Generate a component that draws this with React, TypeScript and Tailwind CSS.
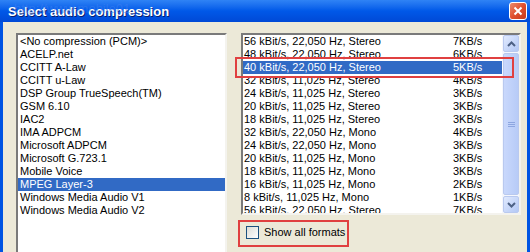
import React from 'react'

const codecs = [
  '<No compression (PCM)>',
  'ACELP.net',
  'CCITT A-Law',
  'CCITT u-Law',
  'DSP Group TrueSpeech(TM)',
  'GSM 6.10',
  'IAC2',
  'IMA ADPCM',
  'Microsoft ADPCM',
  'Microsoft G.723.1',
  'Mobile Voice',
  'MPEG Layer-3',
  'Windows Media Audio V1',
  'Windows Media Audio V2',
]

const formats: [string, string][] = [
  ['56 kBit/s, 22,050 Hz, Stereo', '7KB/s'],
  ['48 kBit/s, 22,050 Hz, Stereo', '6KB/s'],
  ['40 kBit/s, 22,050 Hz, Stereo', '5KB/s'],
  ['32 kBit/s, 11,025 Hz, Stereo', '4KB/s'],
  ['24 kBit/s, 11,025 Hz, Stereo', '3KB/s'],
  ['20 kBit/s, 11,025 Hz, Stereo', '3KB/s'],
  ['18 kBit/s, 11,025 Hz, Stereo', '3KB/s'],
  ['32 kBit/s, 22,050 Hz, Mono', '4KB/s'],
  ['24 kBit/s, 22,050 Hz, Mono', '3KB/s'],
  ['20 kBit/s, 11,025 Hz, Mono', '3KB/s'],
  ['18 kBit/s, 11,025 Hz, Mono', '3KB/s'],
  ['16 kBit/s, 11,025 Hz, Mono', '2KB/s'],
  ['8 kBit/s, 11,025 Hz, Mono', '1KB/s'],
  ['56 kBit/s, 22,050 Hz, Stereo', '7KB/s'],
]

const font = { fontFamily: '"Liberation Sans", Arial, sans-serif' }

function ScrollButton({ down }: { down?: boolean }) {
  return (
    <div className="h-[17px] w-[16px] rounded-[2px] border border-[#b9c9ef] bg-gradient-to-br from-[#e1eafe] to-[#b3c8f5] flex items-center justify-center">
      <svg width="9" height="6" viewBox="0 0 9 6">
        <path
          d={down ? 'M1 1 L4.5 4.5 L8 1' : 'M1 5 L4.5 1.5 L8 5'}
          fill="none"
          stroke="#4d6185"
          strokeWidth="2"
        />
      </svg>
    </div>
  )
}

export default function App() {
  return (
    <div className="relative w-[530px] h-[252px] overflow-hidden bg-[#0054e3] text-[11px] leading-[13px] text-black" style={font}>
      {/* Title bar */}
      <div className="relative h-[22px] flex items-center justify-between pl-[8px] pr-[3px] bg-gradient-to-b from-[#2f83f5] via-[#0058e8] to-[#0049d6]">
        <span className="text-white font-bold text-[13px] [text-shadow:1px_1px_0_#0a1e6e]">
          Select audio compression
        </span>
        <span className="absolute left-[14px] top-[2px] text-[13px] text-[#3e7ff0] opacity-50 pointer-events-none">
          http://www.mobile01
        </span>
        <div className="h-[18px] w-[18px] rounded-[3px] border border-white bg-gradient-to-br from-[#e98a6c] via-[#e0502f] to-[#c53a1c] flex items-center justify-center">
          <svg width="10" height="10" viewBox="0 0 10 10">
            <path d="M1.5 1.5 L8.5 8.5 M8.5 1.5 L1.5 8.5" stroke="white" strokeWidth="2" />
          </svg>
        </div>
      </div>

      {/* Body */}
      <div className="flex h-[230px] mx-[3px] bg-[#ece9d8] pt-[11px] pl-[13px] pr-[6px] gap-[14px]">
        {/* Codec list */}
        <div className="w-[211px] h-[240px] shrink-0 bg-white border-2 border-t-[#7a7a7a] border-l-[#7a7a7a] border-r-[#f4f3ee] border-b-[#f4f3ee]">
          {codecs.map((c, i) => (
            <div
              key={i}
              className={'h-[13px] pl-[2px] whitespace-nowrap ' + (i === 11 ? 'bg-[#316ac5] text-white' : '')}
            >
              {c}
            </div>
          ))}
        </div>

        {/* Format list + checkbox */}
        <div className="flex flex-col w-[280px]">
          <div className="flex h-[182px] bg-white border-2 border-t-[#7a7a7a] border-l-[#7a7a7a] border-r-[#f4f3ee] border-b-[#f4f3ee] overflow-hidden">
            <div className="flex-1 overflow-hidden">
              {formats.map(([a, b], i) => (
                <div
                  key={i}
                  className={'flex h-[13px] pl-[1px] whitespace-nowrap ' + (i === 2 ? 'bg-[#316ac5] text-white' : '')}
                >
                  <span className="w-[209px]">{a}</span>
                  <span>{b}</span>
                </div>
              ))}
            </div>
            <div className="w-[17px] flex flex-col items-end bg-[#f5f7fd]">
              <ScrollButton />
              <div className="flex-1 w-[16px] my-[1px] rounded-[2px] border border-[#b9c9ef] bg-gradient-to-r from-[#c9d8fc] to-[#b7cbf7] flex items-center justify-center">
                <svg width="7" height="7" viewBox="0 0 7 7">
                  <path d="M0 1.5 H7 M0 3.5 H7 M0 5.5 H7" stroke="#8da6e0" strokeWidth="1" />
                </svg>
              </div>
              <ScrollButton down />
            </div>
          </div>
          <div className="flex items-center gap-[5px] mt-[11px] pl-[5px]">
            <div className="h-[13px] w-[13px] border border-[#1c5180] bg-gradient-to-br from-[#dcdcd7] to-white" />
            <span>Show all formats</span>
          </div>
        </div>
      </div>

      {/* Annotation boxes */}
      <div className="absolute left-[235px] top-[57px] w-[279px] h-[21px] border-2 border-[#e04040]" />
      <div className="absolute left-[238px] top-[220px] w-[111px] h-[27px] border-2 border-[#e04040]" />
    </div>
  )
}
